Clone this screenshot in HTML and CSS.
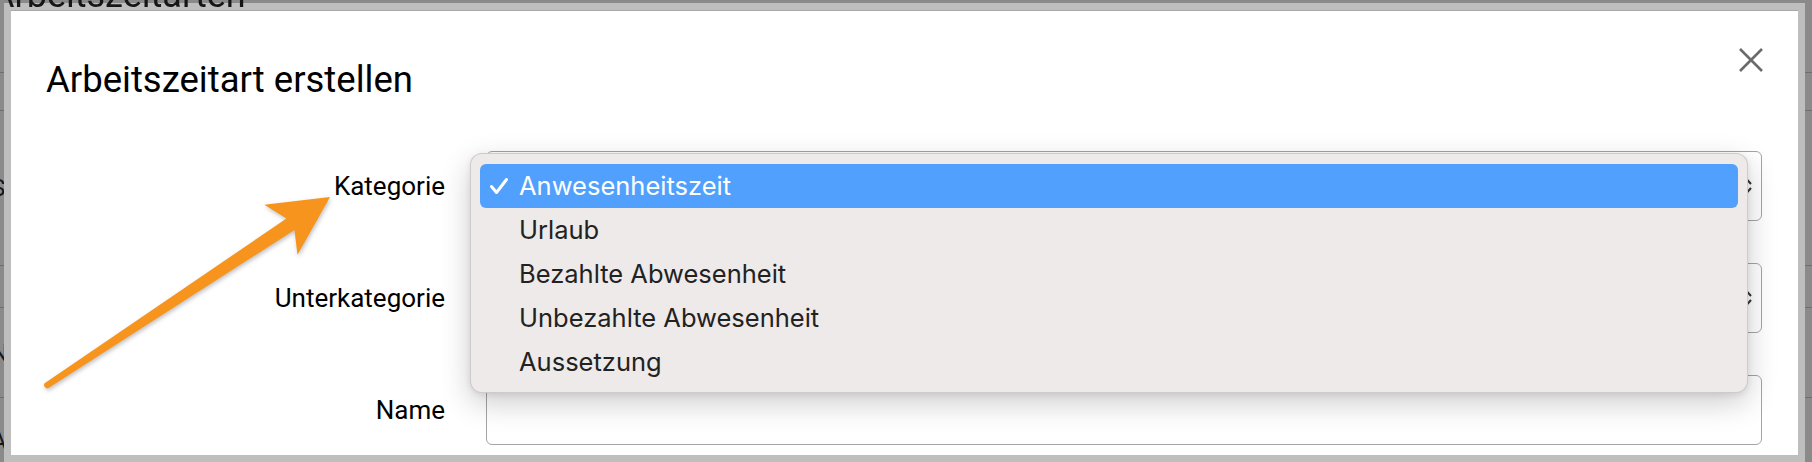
FILE: index.html
```html
<!DOCTYPE html>
<html lang="de">
<head>
    <meta charset="UTF-8">
    <meta name="viewport" content="width=device-width, initial-scale=1.0">
    <title>Arbeitszeitart erstellen</title>
    <link rel="stylesheet" href="styles.css">
</head>
<body>
    <div class="page">
        <h1 class="page-title">Arbeitszeitarten</h1>
        <div class="rows">
            <div class="row row-head"></div>
            <div class="row row-a">Standard</div>
            <div class="row row-b"></div>
            <div class="row row-c">Nacht</div>
            <div class="row row-d">Abwesenheit</div>
        </div>
    </div>

    <div class="modal">
        <div class="modal-header">
            <h2>Arbeitszeitart erstellen</h2>
            <button class="close" aria-label="Schließen">
                <svg width="24" height="24" viewBox="0 0 24 24">
                    <path d="M1 1 L23 23 M23 1 L1 23" stroke="#6b6b6b" stroke-width="2.6" fill="none"/>
                </svg>
            </button>
        </div>
        <div class="form">
            <div class="field field-open">
                <label>Kategorie</label>
                <div class="select">
                    <svg class="chevrons" width="12" height="18" viewBox="0 0 12 18">
                        <path d="M2 7 L6 2.5 L10 7 M2 11 L6 15.5 L10 11" stroke="#333" stroke-width="2" fill="none"/>
                    </svg>
                    <ul class="menu">
                        <li class="selected"><span class="tick"><svg width="20" height="18" viewBox="0 0 20 18"><path d="M2.5 9.5 L7.5 15.5 L17.5 2.5" stroke="#fff" stroke-width="3" fill="none" stroke-linecap="round" stroke-linejoin="round"/></svg></span>Anwesenheitszeit</li>
                        <li><span class="tick"></span>Urlaub</li>
                        <li><span class="tick"></span>Bezahlte Abwesenheit</li>
                        <li><span class="tick"></span>Unbezahlte Abwesenheit</li>
                        <li><span class="tick"></span>Aussetzung</li>
                    </ul>
                </div>
            </div>
            <div class="field">
                <label>Unterkategorie</label>
                <div class="select">
                    <svg class="chevrons" width="12" height="18" viewBox="0 0 12 18">
                        <path d="M2 7 L6 2.5 L10 7 M2 11 L6 15.5 L10 11" stroke="#333" stroke-width="2" fill="none"/>
                    </svg>
                </div>
            </div>
            <div class="field">
                <label>Name</label>
                <div class="input"></div>
            </div>
        </div>
    </div>

    <svg class="arrow" width="1812" height="462" viewBox="0 0 1812 462">
        <path d="M330 197 L264.3 204.7 L286.5 218.5 L44.3 383.5 Q43 387 47.7 388.5 L294.5 230 L297.5 254.7 Z" fill="#f7941d"/>
    </svg>
</body>
</html>
```

FILE: styles.css
```css
body {
    margin: 0;
    height: 462px;
    overflow: hidden;
    background: #8a8a8a;
    font-family: Roboto, "Noto Sans", sans-serif;
    color: #111;
}

/* dimmed page behind the dialog */
.page {
    margin-left: -9px;
    color: #161616;
}
.page-title {
    position: relative;
    z-index: 2;
    margin: -25px 0 0;
    font-size: 36px;
    line-height: 40px;
    font-weight: 400;
}
.rows {
    margin-top: 57px;
}
.row {
    display: flex;
    align-items: center;
    border-top: 1px solid #6f6f6f;
    font-size: 24px;
}
.row-head { height: 37px; }
.row-a { height: 154px; }
.row-b { height: 41px; }
.row-c { height: 89px; }
.row-d { height: 86px; }

/* dialog */
.modal {
    position: fixed;
    z-index: 1;
    left: 4px;
    top: 3px;
    right: 7px;
    bottom: 0;
    background: #fff;
    background-clip: padding-box;
    border: 7px solid #bebebe;
    box-shadow: inset 0 1px 0 #a8a8a8;
    overflow: hidden;
}
.modal-header {
    display: flex;
    justify-content: space-between;
    align-items: flex-start;
    padding: 38px 35px 0 35px;
}
.modal-header h2 {
    margin: 10px 0 0;
    font-size: 36.5px;
    font-weight: 400;
    line-height: normal;
    color: #000;
}
.close {
    border: 0;
    background: none;
    padding: 0;
    width: 24px;
    height: 24px;
    display: block;
}
.close svg {
    display: block;
}

.form {
    margin-top: 50px;
    padding-right: 36px;
    display: flex;
    flex-direction: column;
    gap: 42px;
}
.field {
    display: grid;
    grid-template-columns: 434px 1fr;
    column-gap: 41px;
    align-items: center;
}
.field-open {
    position: relative;
    z-index: 5;
}
.field label {
    text-align: right;
    font-size: 26px;
    color: #000;
}
.select, .input {
    position: relative;
    box-sizing: border-box;
    height: 70px;
    border: 1px solid #a4a4a4;
    border-radius: 6px;
    background: #fff;
}
.select {
    display: flex;
    align-items: center;
    justify-content: flex-end;
    padding-right: 8px;
}

/* native popup list, opened */
.menu {
    position: absolute;
    z-index: 5;
    left: -17px;
    right: 13px;
    top: 1px;
    box-sizing: border-box;
    margin: 0;
    padding: 10px 9px 8px;
    list-style: none;
    background: #eeeaea;
    border: 1px solid rgba(0, 0, 0, 0.13);
    border-radius: 12px;
    box-shadow: 0 10px 30px rgba(0, 0, 0, 0.2), 0 2px 6px rgba(0, 0, 0, 0.08);
    font-family: Inter, "Noto Sans", sans-serif;
    font-size: 25.5px;
    color: #222;
}
.menu li {
    display: flex;
    align-items: center;
    height: 44px;
    line-height: 44px;
    padding-left: 9px;
    border-radius: 6px;
}
.menu li.selected {
    background: #51a0fe;
    color: #fff;
}
.tick {
    width: 20px;
    height: 18px;
    margin-right: 10px;
}
.tick svg {
    display: block;
}

.arrow {
    position: absolute;
    z-index: 10;
    left: 0;
    top: 0;
    pointer-events: none;
    filter: drop-shadow(1px 2px 2px rgba(0, 0, 0, 0.25));
}
```
